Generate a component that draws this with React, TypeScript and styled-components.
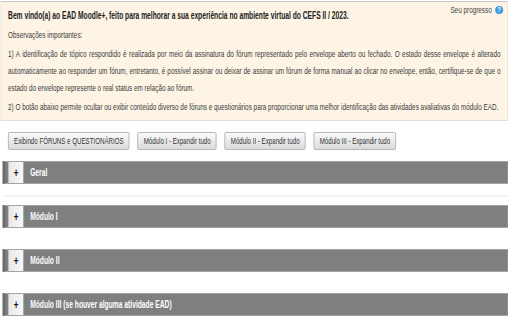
import styled, { createGlobalStyle } from "styled-components";

// the reference page is a narrow-font page; we lay it out at 764px and squeeze it to 512px
const SQUEEZE = 0.67;

const GlobalStyle = createGlobalStyle`
	body {
		margin: 0;
		background: #fff;
		overflow: hidden;
		font-family: "Liberation Sans", Arial, sans-serif;
		color: #333;
	}
`;

const App = () => {
	return (
		<Page>
			<GlobalStyle />
			<InfoBox>
				<Progress>
					Seu progresso <HelpIcon>?</HelpIcon>
				</Progress>
				<Intro>
					Bem vindo(a) ao EAD Moodle+, feito para melhorar a sua experiência no ambiente virtual do CEFS II / 2023.
				</Intro>
				<Para>Observações importantes:</Para>
				<Para $justify>
					1) A identificação de tópico respondido é realizada por meio da assinatura do fórum representado pelo envelope aberto ou
					fechado. O estado desse envelope é alterado automaticamente ao responder um fórum, entretanto, é possível assinar ou
					deixar de assinar um fórum de forma manual ao clicar no envelope, então, certifique-se de que o estado do envelope
					represente o real status em relação ao fórum.
				</Para>
				<Para>
					2) O botão abaixo permite ocultar ou exibir conteúdo diverso de fóruns e questionários para proporcionar uma melhor
					identificação das atividades avaliativas do módulo EAD.
				</Para>
			</InfoBox>

			<ButtonRow>
				<Button>Exibindo FÓRUNS e QUESTIONÁRIOS</Button>
				<Button>Módulo I - Expandir tudo</Button>
				<Button>Módulo II - Expandir tudo</Button>
				<Button>Módulo III - Expandir tudo</Button>
			</ButtonRow>

			<Sections>
				<Section $divider>
					<SectionBar>
						<Toggle>+</Toggle>
						<SectionTitle>Geral</SectionTitle>
					</SectionBar>
				</Section>
				<Section>
					<SectionBar>
						<Toggle>+</Toggle>
						<SectionTitle>Módulo I</SectionTitle>
					</SectionBar>
				</Section>
				<Section>
					<SectionBar>
						<Toggle>+</Toggle>
						<SectionTitle>Módulo II</SectionTitle>
					</SectionBar>
				</Section>
				<Section>
					<SectionBar>
						<Toggle>+</Toggle>
						<SectionTitle>Módulo III (se houver alguma atividade EAD)</SectionTitle>
					</SectionBar>
				</Section>
			</Sections>
		</Page>
	);
};

export default App;

const Page = styled.div`
	width: ${Math.round(512 / SQUEEZE)}px;
	padding: 1px 6px 0 1px;
	box-sizing: border-box;
	transform: scaleX(${SQUEEZE});
	transform-origin: 0 0;
`;

const InfoBox = styled.div`
	background-color: #fdf4e5;
	border: 1px solid #e4ded5;
	border-top-color: #c8c8c8;
	padding: 5px 10px 3px 10px;
	font-size: 9.5px;
	line-height: 17px;
	color: #3a3a3a;
`;

const Progress = styled.div`
	float: right;
	margin-top: -3px;
	margin-right: -4px;
	display: flex;
	align-items: center;
	gap: 5px;
	font-size: 9.5px;
	color: #444;
	line-height: 12px;
`;

const HelpIcon = styled.span`
	display: inline-flex;
	align-items: center;
	justify-content: center;
	width: 12px;
	height: 8px;
	border-radius: 50%;
	background: #3d9de3;
	color: #fff;
	font-size: 8px;
	font-weight: bold;
	line-height: 1;
`;

const Intro = styled.p`
	margin: 0 0 2px;
	font-size: 10px;
	font-weight: bold;
	color: #222;
`;

const Para = styled.p<{ $justify?: boolean }>`
	margin: 0 0 2px;
	text-align: ${(p) => (p.$justify ? "justify" : "left")};
`;

const ButtonRow = styled.div`
	display: flex;
	gap: 12px;
	padding: 11px 11px;
`;

const Button = styled.button`
	height: 18px;
	padding: 0 8px;
	font-family: inherit;
	font-size: 9.2px;
	color: #333;
	background: linear-gradient(#fbfbfb, #dadada);
	border: 1px solid #a8a8a8;
	border-radius: 2px;
	cursor: pointer;
`;

const Sections = styled.div`
	display: flex;
	flex-direction: column;
	padding-left: 3px;
`;

const Section = styled.div<{ $divider?: boolean }>`
	padding-bottom: 21px;
	position: relative;
	${(p) =>
		p.$divider &&
		`
		&::after {
			content: "";
			position: absolute;
			left: 0;
			right: 0;
			bottom: 8px;
			height: 2px;
			background: #f4f4f4;
		}
	`}
`;

const SectionBar = styled.div`
	display: flex;
	align-items: stretch;
	height: 21px;
	background-color: #7f7f7f;
	border-top: 1px solid #a4a4a4;
	border-bottom: 1px solid #a4a4a4;
	border-left: 4px solid #6a6a6a;
	padding-left: 4px;
`;

const Toggle = styled.div`
	width: 22px;
	display: flex;
	align-items: center;
	justify-content: center;
	background: linear-gradient(90deg, #e8e8e8, #f8f8f8);
	border-left: 1px solid #cfcfcf;
	border-right: 1px solid #9a9a9a;
	font-size: 12px;
	font-weight: bold;
	color: #111;
`;

const SectionTitle = styled.div`
	display: flex;
	align-items: center;
	padding-left: 9px;
	font-size: 10px;
	font-weight: bold;
	color: #fff;
`;
